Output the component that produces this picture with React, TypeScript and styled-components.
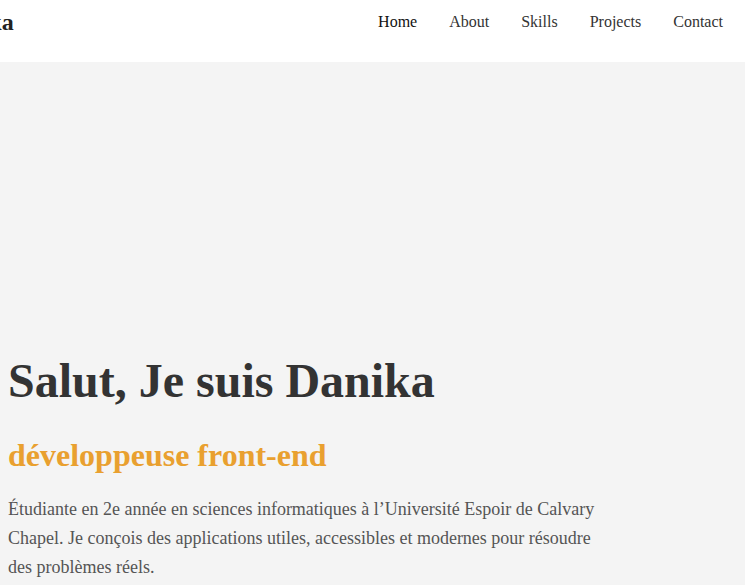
import styled, { createGlobalStyle } from 'styled-components'

const GlobalStyle = createGlobalStyle`
  html, body {
    margin: 0;
    padding: 0;
    overflow: hidden;
  }

  body {
    font-family: "Liberation Serif", "Times New Roman", serif;
    background: #f4f4f4;
    color: #333;
  }
`

const Header = styled.header`
  display: flex;
  justify-content: space-between;
  align-items: flex-start;
  height: 62px;
  padding: 0 22px 0 0;
  background: #ffffff;
  box-sizing: border-box;
  overflow: hidden;
`

const Logo = styled.div`
  margin: 9px 0 0 -61px;
  font-size: 24px;
  font-weight: 700;
  color: #222;
`

const Nav = styled.nav`
  display: flex;
  gap: 32px;
  margin-top: 13px;
`

const NavLink = styled.a<{ $active?: boolean }>`
  font-size: 16px;
  color: ${(p) => (p.$active ? '#111' : '#333')};
  text-decoration: none;
`

const Hero = styled.section`
  padding: 291px 8px 0;
`

const Title = styled.h1`
  margin: 0;
  font-size: 48px;
  font-weight: 700;
  color: #333;
`

const Subtitle = styled.h2`
  margin: 29px 0 0;
  font-size: 32px;
  font-weight: 700;
  color: #e9a02f;
`

const Intro = styled.p`
  max-width: 600px;
  margin: 21px 0 0;
  font-size: 18px;
  line-height: 1.6;
  color: #555;
`

const links = ['Home', 'About', 'Skills', 'Projects', 'Contact']

export default function App () {
  return (
    <>
      <GlobalStyle />
      <Header>
        <Logo>Danika</Logo>
        <Nav>
          {links.map((l, i) => (
            <NavLink key={l} href={`#${l.toLowerCase()}`} $active={i === 0}>{l}</NavLink>
          ))}
        </Nav>
      </Header>
      <Hero>
        <Title>Salut, Je suis Danika</Title>
        <Subtitle>développeuse front-end</Subtitle>
        <Intro>
          Étudiante en 2e année en sciences informatiques à l’Université Espoir de Calvary
          Chapel. Je conçois des applications utiles, accessibles et modernes pour résoudre
          des problèmes réels.
        </Intro>
      </Hero>
    </>
  )
}
